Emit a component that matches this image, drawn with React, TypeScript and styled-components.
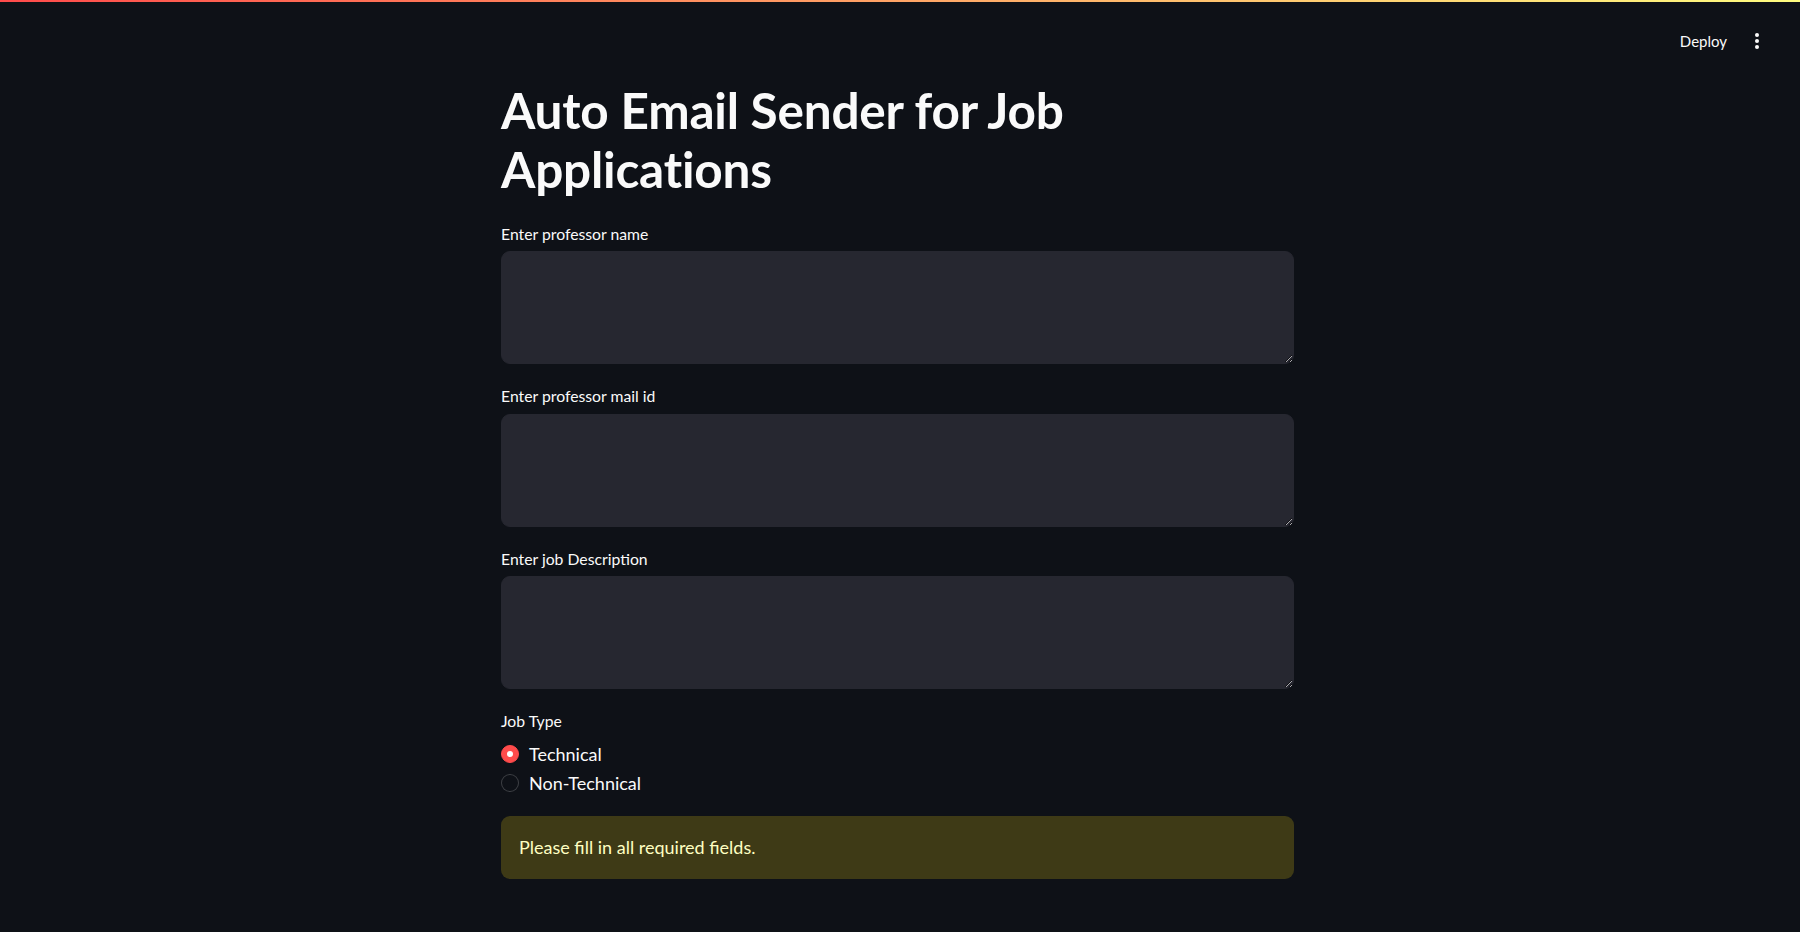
import React, { useState } from "react";
import styled, { createGlobalStyle } from "styled-components";

const GlobalStyle = createGlobalStyle`
  html, body {
    margin: 0;
    padding: 0;
    background: #0e1117;
    color: rgb(250, 250, 250);
    font-family: "Source Sans Pro", Lato, "Noto Sans", sans-serif;
  }
  * { box-sizing: border-box; }
`;

const Page = styled.div`
  position: relative;
  min-height: 932px;
  background: #0e1117;
`;

const Decoration = styled.div`
  position: absolute;
  top: 0;
  left: 0;
  right: 0;
  height: 2px;
  background: linear-gradient(90deg, rgb(255, 75, 75), rgb(255, 253, 128));
`;

const Header = styled.header`
  height: 81px;
  display: flex;
  justify-content: flex-end;
  align-items: center;
  gap: 14px;
  padding: 0 35px 0 0;
`;

const DeployButton = styled.button`
  background: transparent;
  border: none;
  color: rgb(250, 250, 250);
  font-family: inherit;
  font-size: 15px;
  padding: 4px 8px;
  cursor: pointer;
`;

const MenuButton = styled.button`
  background: transparent;
  border: none;
  padding: 0;
  width: 16px;
  height: 20px;
  display: flex;
  align-items: center;
  justify-content: center;
  color: rgb(250, 250, 250);
`;

const Main = styled.main`
  width: 798px;
  margin: 0 auto;
  padding-right: 5px;
  display: flex;
  flex-direction: column;
  gap: 18px;
`;

const Title = styled.h1`
  margin: 0 0 2px;
  font-size: 49.5px;
  line-height: 1.2;
  font-weight: 700;
  color: rgb(250, 250, 250);
  letter-spacing: -0.2px;
`;

const Field = styled.div`
  display: flex;
  flex-direction: column;
`;

const Label = styled.label`
  display: flex;
  align-items: center;
  min-height: 27px;
  margin-bottom: 4.5px;
  font-size: 15.75px;
  color: rgb(250, 250, 250);
`;

const TextArea = styled.textarea`
  width: 100%;
  height: 113px;
  background: rgb(38, 39, 48);
  border: 1px solid rgb(38, 39, 48);
  border-radius: 9px;
  color: rgb(250, 250, 250);
  font-family: inherit;
  font-size: 18px;
  padding: 14px 18px;
  resize: vertical;
  outline: none;
`;

const RadioGroup = styled.div`
  display: flex;
  flex-direction: column;
  padding-top: 1px;
`;

const RadioRow = styled.label`
  display: flex;
  align-items: center;
  height: 29px;
  gap: 10px;
  font-size: 18px;
  color: rgb(250, 250, 250);
  cursor: pointer;
`;

const RadioDot = styled.span<{ $checked: boolean }>`
  width: 18px;
  height: 18px;
  border-radius: 50%;
  flex-shrink: 0;
  display: flex;
  align-items: center;
  justify-content: center;
  background: ${(p) => (p.$checked ? "rgb(255, 75, 75)" : "#0e1117")};
  border: 1px solid ${(p) => (p.$checked ? "rgb(255, 75, 75)" : "rgba(250, 250, 250, 0.2)")};
  &::after {
    content: "";
    display: ${(p) => (p.$checked ? "block" : "none")};
    width: 6px;
    height: 6px;
    border-radius: 50%;
    background: #fff;
  }
`;

const Alert = styled.div`
  background: rgba(255, 227, 18, 0.2);
  color: rgb(255, 255, 194);
  border-radius: 9px;
  padding: 18px;
  font-size: 18px;
  line-height: 27px;
`;

const options = ["Technical", "Non-Technical"];

export default function App() {
  const [jobType, setJobType] = useState("Technical");
  return (
    <Page>
      <GlobalStyle />
      <Decoration />
      <Header>
        <DeployButton>Deploy</DeployButton>
        <MenuButton aria-label="Main menu">
          <svg width="4" height="16" viewBox="0 0 4 16" fill="currentColor">
            <circle cx="2" cy="2" r="2" />
            <circle cx="2" cy="8" r="2" />
            <circle cx="2" cy="14" r="2" />
          </svg>
        </MenuButton>
      </Header>
      <Main>
        <Title>Auto Email Sender for Job Applications</Title>
        <Field>
          <Label>Enter professor name</Label>
          <TextArea />
        </Field>
        <Field>
          <Label>Enter professor mail id</Label>
          <TextArea />
        </Field>
        <Field>
          <Label>Enter job Description</Label>
          <TextArea />
        </Field>
        <Field>
          <Label>Job Type</Label>
          <RadioGroup>
            {options.map((o) => (
              <RadioRow key={o} onClick={() => setJobType(o)}>
                <RadioDot $checked={jobType === o} />
                {o}
              </RadioRow>
            ))}
          </RadioGroup>
        </Field>
        <Alert>Please fill in all required fields.</Alert>
      </Main>
    </Page>
  );
}
